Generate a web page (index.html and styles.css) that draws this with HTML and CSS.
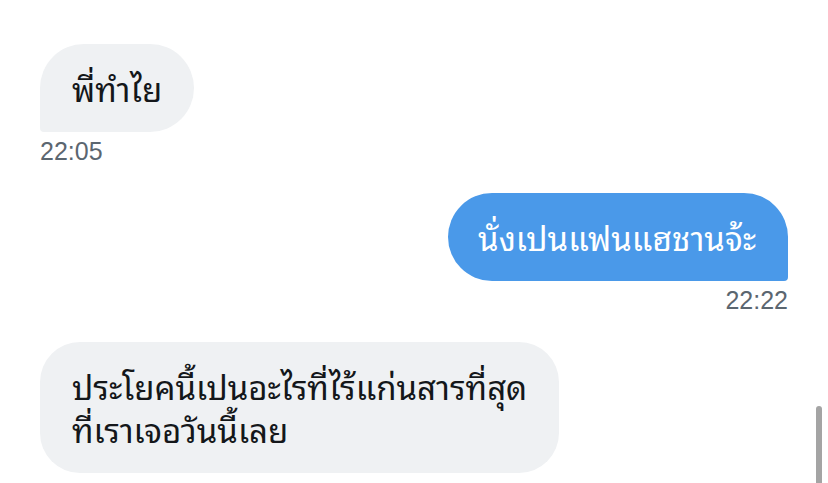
FILE: index.html
```html
<!DOCTYPE html>
<html lang="th">
<head>
<meta charset="utf-8">
<link rel="stylesheet" href="styles.css">
</head>
<body>
<div class="chat">
  <div class="msg in">
    <div class="bubble">พี่ทำไย</div>
    <div class="time">22:05</div>
  </div>
  <div class="msg out">
    <div class="bubble">นั่งเปนแฟนแฮชานจ้ะ</div>
    <div class="time">22:22</div>
  </div>
  <div class="msg in">
    <div class="bubble wide">ประโยคนี้เปนอะไรที่ไร้แก่นสารที่สุด<br>ที่เราเจอวันนี้เลย</div>
  </div>
</div>
<div class="scrollbar"></div>
</body>
</html>
```
FILE: styles.css
```css
html, body {
  margin: 0;
  padding: 0;
  background: #ffffff;
  overflow: hidden;
  height: 483px;
}
body {
  font-family: "Noto Sans Thai Looped", "Noto Sans Thai", "Noto Sans", "Liberation Sans", sans-serif;
}
.chat {
  display: flex;
  flex-direction: column;
  padding: 44px 40px 0 40px;
}
.msg {
  display: flex;
  flex-direction: column;
  gap: 4px;
  margin-bottom: 27px;
}
.msg.in { align-items: flex-start; }
.msg.out { align-items: flex-end; }
.bubble {
  font-size: 33px;
  line-height: 43px;
  padding: 22px 32px 23px 32px;
  color: #14171a;
  background: #eff1f3;
  border-radius: 44px 44px 44px 4px;
}
.bubble.wide {
  border-radius: 40px;
}
.msg.out .bubble {
  background: #4a99e9;
  color: #ffffff;
  padding-left: 30px;
  border-radius: 44px 44px 4px 44px;
}
.time {
  font-family: "Liberation Sans", "Noto Sans", sans-serif;
  font-size: 25px;
  line-height: 30px;
  color: #5b6670;
}
.scrollbar {
  position: absolute;
  left: 816px;
  top: 406px;
  width: 6px;
  height: 90px;
  border-radius: 3px;
  background: #a4a4a4;
}
```
